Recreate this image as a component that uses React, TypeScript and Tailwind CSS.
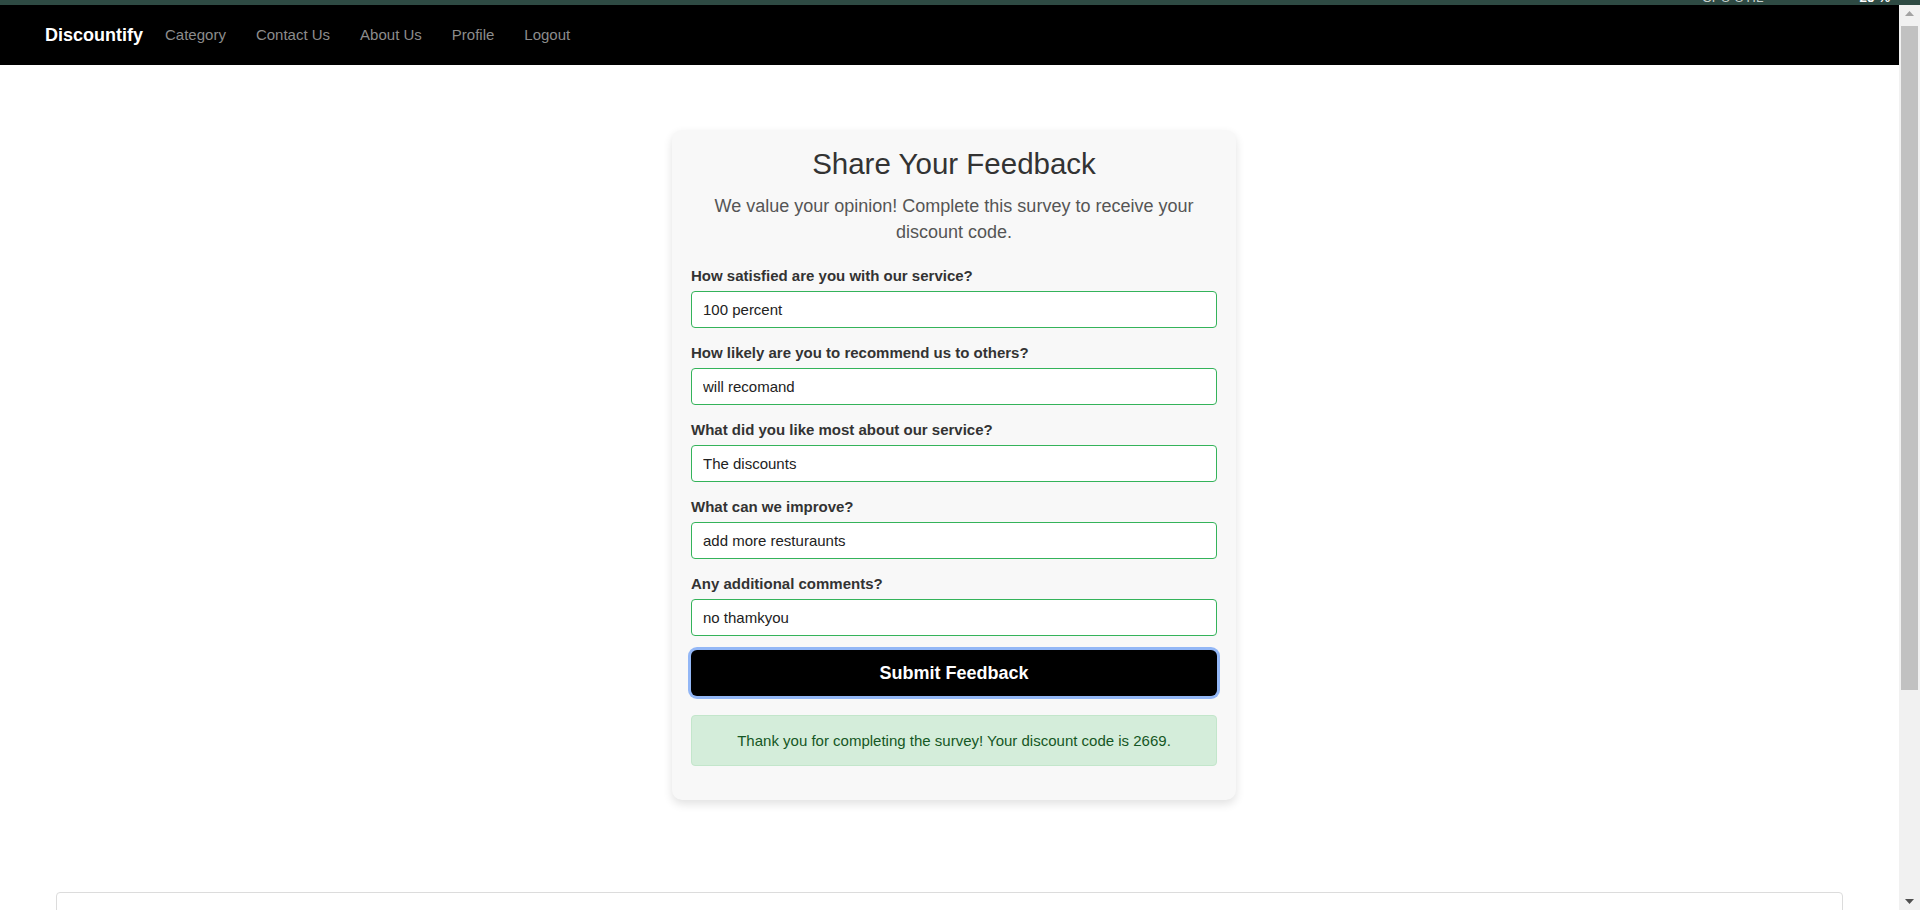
import React from 'react';

const questions = [
  { label: 'How satisfied are you with our service?', value: '100 percent' },
  { label: 'How likely are you to recommend us to others?', value: 'will recomand' },
  { label: 'What did you like most about our service?', value: 'The discounts' },
  { label: 'What can we improve?', value: 'add more resturaunts' },
  { label: 'Any additional comments?', value: 'no thamkyou' },
];

const navLinks = ['Category', 'Contact Us', 'About Us', 'Profile', 'Logout'];

const App: React.FC = () => {
  return (
    <div className="w-[1920px] h-[910px] overflow-hidden flex flex-col bg-white font-['Liberation_Sans',Arial,sans-serif]">
      {/* system monitor strip */}
      <div className="h-[5px] shrink-0 bg-[#2e4a43] overflow-hidden">
        <div className="flex items-start mt-[-9px] leading-none text-[13.5px]">
          <span className="ml-[1702px] text-[#c6cfcc]">CPU UTIL</span>
          <span className="ml-[96px] font-bold text-white">25 %</span>
        </div>
      </div>

      <div className="flex flex-1 min-h-0">
        {/* page */}
        <div className="flex-1 flex flex-col min-w-0">
          <nav className="h-[60px] shrink-0 bg-black flex items-center pl-[45px]">
            <span className="text-white font-bold text-[18px]">Discountify</span>
            <ul className="flex items-center gap-[30px] ml-[22px]">
              {navLinks.map((l) => (
                <li key={l}>
                  <a href="#" className="text-[15px] text-[#8c8c8c]">{l}</a>
                </li>
              ))}
            </ul>
          </nav>

          <main className="flex justify-center pt-[65px] pl-[9px]">
            <div className="w-[564px] bg-[#f8f8f8] rounded-[10px] shadow-[0_4px_10px_rgba(0,0,0,0.12)] px-[19px] pt-[15px] pb-[34px]">
              <h2 className="text-center text-[29.5px] leading-[38px] text-[#333] mb-[10px]">Share Your Feedback</h2>
              <p className="text-center text-[18px] leading-[26px] text-[#555] mb-[20px]">
                We value your opinion! Complete this survey to receive your discount code.
              </p>

              <form className="flex flex-col gap-[14px]" onSubmit={(e) => e.preventDefault()}>
                {questions.map((q) => (
                  <div key={q.label} className="flex flex-col">
                    <label className="text-[15px] leading-[22px] font-bold text-[#333] mb-[4px]">{q.label}</label>
                    <input
                      readOnly
                      value={q.value}
                      className="h-[37px] w-full bg-white border border-[#34b35a] rounded-[4px] px-[11px] text-[15px] text-[#222] outline-none"
                    />
                  </div>
                ))}
                <button
                  type="submit"
                  className="h-[46px] w-full bg-black text-white font-bold text-[18px] rounded-[6px] ring-[3px] ring-[#93b7f6]"
                >
                  Submit Feedback
                </button>
              </form>

              <div className="mt-[19px] bg-[#d4edda] border border-[#c3e6cb] rounded-[4px] py-[14px] text-center text-[15px] leading-[21px] text-[#155724]">
                Thank you for completing the survey! Your discount code is 2669.
              </div>
            </div>
          </main>

          <div className="mt-[92px] mx-[56px] h-[200px] shrink-0 bg-white border border-[#dcdcdc] rounded-t-[4px]" />
        </div>

        {/* scrollbar */}
        <div className="w-[21px] shrink-0 bg-[#f1f1f1] flex flex-col">
          <div className="h-[17px] flex items-center justify-center">
            <svg width="9" height="5" viewBox="0 0 9 5"><polygon points="0,5 4.5,0 9,5" fill="#a3a3a3" /></svg>
          </div>
          <div className="flex-1 px-[2px] pt-[4px]">
            <div className="h-[664px] bg-[#c1c1c1]" />
          </div>
          <div className="h-[17px] flex items-center justify-center">
            <svg width="9" height="5" viewBox="0 0 9 5"><polygon points="0,0 4.5,5 9,0" fill="#505050" /></svg>
          </div>
        </div>
      </div>
    </div>
  );
};

export default App;
